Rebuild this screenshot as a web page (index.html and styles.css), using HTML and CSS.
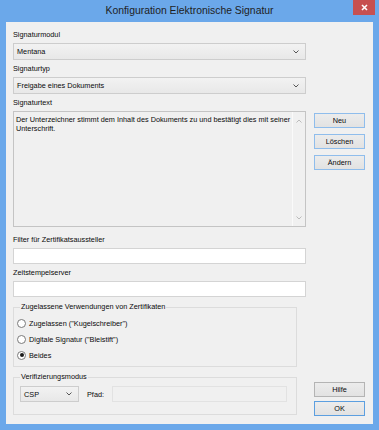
FILE: index.html
```html
<!DOCTYPE html>
<html lang="de">
<head>
    <meta charset="UTF-8">
    <title>Konfiguration Elektronische Signatur</title>
    <link rel="stylesheet" href="styles.css">
</head>
<body>
    <div class="window">
        <div class="titlebar">
            <div class="title">Konfiguration Elektronische Signatur</div>
            <div class="close">
                <svg width="7" height="7" viewBox="0 0 7 7"><path d="M1 1 L6 6 M6 1 L1 6" stroke="#fff" stroke-width="1.6"/></svg>
            </div>
        </div>

        <div class="client">
            <div class="main">
                <div class="lbl">Signaturmodul</div>
                <div class="select">
                    <span>Mentana</span>
                    <svg class="chev" width="6" height="4" viewBox="0 0 6 4"><path d="M0.5 0.5 L3 3 L5.5 0.5" fill="none" stroke="#555" stroke-width="1"/></svg>
                </div>

                <div class="lbl">Signaturtyp</div>
                <div class="select">
                    <span>Freigabe eines Dokuments</span>
                    <svg class="chev" width="6" height="4" viewBox="0 0 6 4"><path d="M0.5 0.5 L3 3 L5.5 0.5" fill="none" stroke="#555" stroke-width="1"/></svg>
                </div>

                <div class="lbl">Signaturtext</div>
                <div class="memo">
                    <div class="memo-text">Der Unterzeichner stimmt dem Inhalt des Dokuments zu und bestätigt dies mit seiner<br>Unterschrift.</div>
                    <div class="scroll">
                        <svg width="6" height="4" viewBox="0 0 6 4"><path d="M0.5 3.5 L3 1 L5.5 3.5" fill="none" stroke="#bbb" stroke-width="1"/></svg>
                        <svg width="6" height="4" viewBox="0 0 6 4"><path d="M0.5 0.5 L3 3 L5.5 0.5" fill="none" stroke="#bbb" stroke-width="1"/></svg>
                    </div>
                </div>

                <div class="lbl lbl-gap">Filter für Zertifikatsaussteller</div>
                <div class="input"></div>

                <div class="lbl">Zeitstempelserver</div>
                <div class="input"></div>

                <fieldset class="group usage">
                    <legend>Zugelassene Verwendungen von Zertifikaten</legend>
                    <div class="radio-row"><span class="radio"></span>Zugelassen ("Kugelschreiber")</div>
                    <div class="radio-row"><span class="radio"></span>Digitale Signatur ("Bleistift")</div>
                    <div class="radio-row"><span class="radio checked"></span>Beides</div>
                </fieldset>

                <fieldset class="group verify">
                    <legend>Verifizierungsmodus</legend>
                    <div class="verify-row">
                        <div class="select small">
                            <span>CSP</span>
                            <svg class="chev" width="6" height="4" viewBox="0 0 6 4"><path d="M0.5 0.5 L3 3 L5.5 0.5" fill="none" stroke="#555" stroke-width="1"/></svg>
                        </div>
                        <span class="path-lbl">Pfad:</span>
                        <div class="input disabled"></div>
                    </div>
                </fieldset>
            </div>

            <div class="side">
                <div class="btn-stack">
                    <div class="btn">Neu</div>
                    <div class="btn">Löschen</div>
                    <div class="btn">Ändern</div>
                </div>
                <div class="btn-stack bottom">
                    <div class="btn plain">Hilfe</div>
                    <div class="btn default">OK</div>
                </div>
            </div>
        </div>
    </div>
</body>
</html>
```

FILE: styles.css
```css
:root {
    --frame: #6ba8ea;
    --face: #f0f0f0;
    --text: #0a0a0a;
    --line: #d4d4d4;
}

* {
    margin: 0;
    padding: 0;
    box-sizing: border-box;
}

body {
    font-family: 'Liberation Sans', Arial, sans-serif;
    font-size: 7.3px;
    color: var(--text);
    background: var(--frame);
}

.window {
    width: 379px;
    height: 430px;
    background: var(--frame);
    display: flex;
    flex-direction: column;
    padding: 0 6px 6px;
}

.titlebar {
    position: relative;
    height: 22px;
    flex: none;
}

.title {
    text-align: center;
    font-size: 10.4px;
    line-height: 21px;
    color: #1e1e1e;
}

.close {
    position: absolute;
    top: 0;
    right: -2px;
    width: 22px;
    height: 15px;
    background: #c75050;
    display: flex;
    align-items: center;
    justify-content: center;
}

.client {
    flex: 1;
    background: var(--face);
    display: flex;
    gap: 8px;
    padding: 4px 8px 8px 7px;
}

.main {
    width: 293px;
    display: flex;
    flex-direction: column;
}

.lbl {
    line-height: 17px;
    height: 17px;
}

.lbl-gap {
    margin-top: 4px;
}

.select {
    height: 17px;
    border: 1px solid #cdcdcd;
    background: linear-gradient(#f2f2f2, #e8e8e8);
    display: flex;
    align-items: center;
    padding: 0 6px 0 3px;
}

.select span {
    flex: 1;
}

.select.small {
    width: 59px;
    height: 16px;
    flex: none;
}

.memo {
    height: 116px;
    border: 1px solid #c4c4c4;
    background: var(--face);
    display: flex;
}

.memo-text {
    flex: 1;
    padding: 3px 0 0 2px;
    line-height: 9px;
    white-space: nowrap;
}

.scroll {
    width: 13px;
    border-left: 1px solid #fafafa;
    display: flex;
    flex-direction: column;
    justify-content: space-between;
    align-items: center;
    padding: 7px 0 6px;
}

.input {
    height: 16px;
    border: 1px solid var(--line);
    background: #fff;
}

.input.disabled {
    flex: 1;
    background: var(--face);
    border-color: #e2e2e2;
}

.group {
    width: 284px;
    border: 1px solid #dcdcdc;
    padding: 0 9px 0 6px;
}

.group legend {
    line-height: 12px;
    padding: 0 1px;
    margin-left: 0;
}

.usage {
    margin-top: 4px;
    padding-top: 2px;
    padding-bottom: 3px;
}

.radio-row {
    height: 16px;
    display: flex;
    align-items: center;
    gap: 3px;
    margin-left: -3px;
}

.radio {
    width: 9px;
    height: 9px;
    border-radius: 50%;
    border: 1px solid #7a7a7a;
    background: #fff;
    display: flex;
    align-items: center;
    justify-content: center;
}

.radio.checked::after {
    content: "";
    width: 4px;
    height: 4px;
    border-radius: 50%;
    background: #1a1a1a;
}

.verify {
    margin-top: 4px;
    padding-top: 3px;
    padding-bottom: 12px;
}

.verify-row {
    display: flex;
    align-items: center;
    height: 16px;
}

.path-lbl {
    margin: 0 8px 0 8px;
}

.side {
    width: 51px;
    display: flex;
    flex-direction: column;
    justify-content: space-between;
    padding-top: 87px;
}

.btn-stack {
    display: flex;
    flex-direction: column;
    gap: 6px;
}

.btn-stack.bottom {
    gap: 4px;
}

.btn {
    height: 15px;
    line-height: 13px;
    text-align: center;
    border: 1px solid #8fbdec;
    background: linear-gradient(#ececec, #e2e2e2);
}

.btn.plain {
    border-color: #b4b4b4;
}

.btn.default {
    border-color: #5c9fe0;
}
```
